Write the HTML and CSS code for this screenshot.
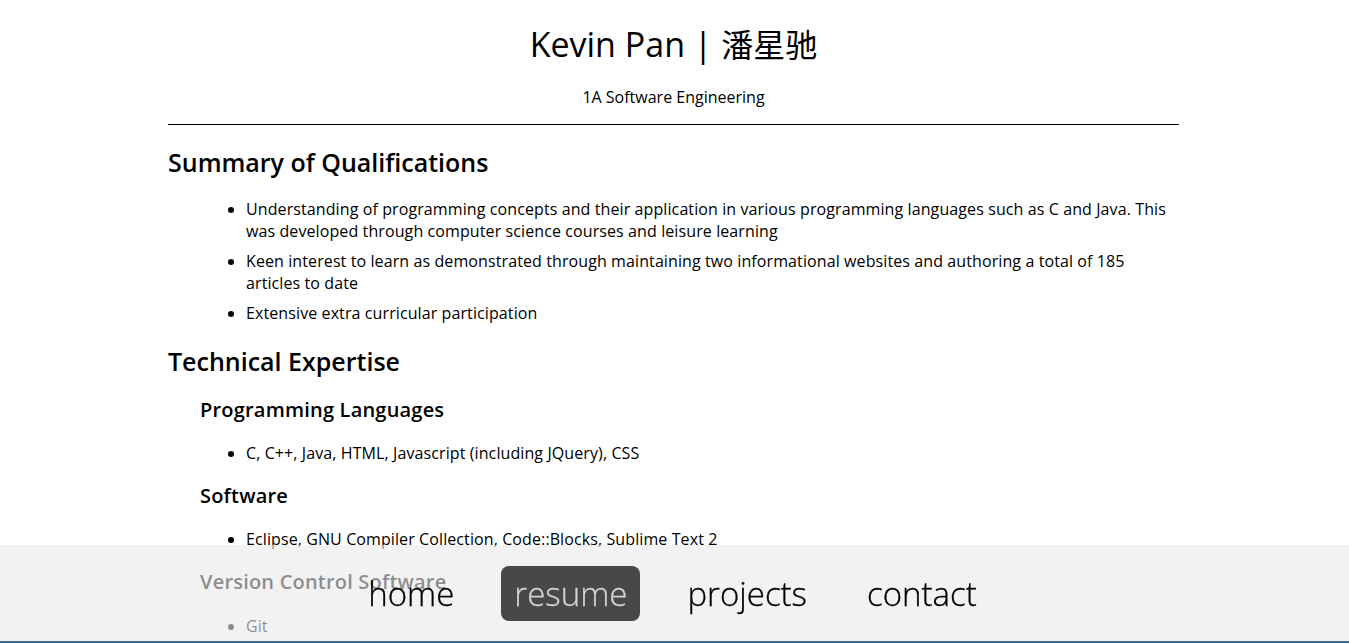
FILE: index.html
```html
<!DOCTYPE html>
<html lang="en">
<head>
<meta charset="utf-8">
<title>Kevin Pan | 潘星驰 - Resume</title>
<link rel="stylesheet" href="styles.css">
</head>
<body>
<div class="page">
  <header class="masthead">
    <h1 class="name">Kevin Pan | <span class="cjk">潘星驰</span></h1>
    <p class="tagline">1A Software Engineering</p>
  </header>
  <hr class="rule">
  <h2 class="section-title">Summary of Qualifications</h2>
  <ul class="list">
    <li>Understanding of programming concepts and their application in various programming languages such as C and Java. This was developed through computer science courses and leisure learning</li>
    <li>Keen interest to learn as demonstrated through maintaining two informational websites and authoring a total of 185 articles to date</li>
    <li>Extensive extra curricular participation</li>
  </ul>
  <h2 class="section-title">Technical Expertise</h2>
  <h3 class="sub-title">Programming Languages</h3>
  <ul class="list">
    <li>C, C++, Java, HTML, Javascript (including JQuery), CSS</li>
  </ul>
  <h3 class="sub-title">Software</h3>
  <ul class="list">
    <li>Eclipse, GNU Compiler Collection, Code::Blocks, Sublime Text 2</li>
  </ul>
  <h3 class="sub-title">Version Control Software</h3>
  <ul class="list list-git">
    <li>Git</li>
  </ul>
  <h2 class="section-title">Extracurricular Activities</h2>
</div>
<nav class="nav">
  <a class="nav-link" href="#">home</a>
  <a class="nav-link active" href="#">resume</a>
  <a class="nav-link" href="#">projects</a>
  <a class="nav-link" href="#">contact</a>
</nav>
<div class="taskbar"></div>
</body>
</html>
```
FILE: styles.css
```css
html, body {
  margin: 0;
  padding: 0;
  overflow: hidden;
  background: #fff;
}
body {
  font-family: "Open Sans", "Noto Sans CJK SC", sans-serif;
  font-size: 16px;
  color: #000;
}
.page {
  width: 1011px;
  margin: 0 auto;
  padding-right: 2px;
}
.masthead {
  text-align: center;
}
.name {
  font-size: 34px;
  font-weight: 400;
  line-height: 40px;
  margin: 23px 0 0;
}
.cjk {
  font-family: "Noto Sans CJK SC", sans-serif;
  font-size: 32px;
}
.tagline {
  margin: 22px 0 0;
  line-height: 22px;
}
.rule {
  border: 0;
  border-top: 1px solid #000;
  margin: 16px 0 0;
  height: 0;
}
.section-title {
  font-size: 25px;
  font-weight: 600;
  line-height: 32px;
  margin: 21px 0 19px;
}
.sub-title {
  font-size: 20px;
  font-weight: 600;
  line-height: 28px;
  letter-spacing: 0.2px;
  margin: 18px 0 18px 32px;
}
.list {
  margin: 18px 0;
  padding-left: 78px;
  line-height: 22px;
  letter-spacing: 0.1px;
}
.section-title + .list {
  margin-top: 20px;
}
.list-git {
  margin-top: 19px;
}
.list li {
  margin-bottom: 8px;
}
.list li:last-child {
  margin-bottom: 0;
}
.nav {
  position: fixed;
  left: 0;
  right: 0;
  bottom: 2px;
  height: 96px;
  padding-right: 4px;
  background: rgba(234, 234, 234, 0.6);
  display: flex;
  justify-content: center;
  align-items: center;
}
.nav-link {
  font-size: 33px;
  font-weight: 300;
  line-height: 55px;
  padding: 0 13px;
  margin: 0 17px;
  border-radius: 8px;
  color: #000;
  text-decoration: none;
  -webkit-text-stroke: 0.3px #000;
}
.nav-link.active {
  background: #484848;
  color: #d2d2d2;
  -webkit-text-stroke: 0.3px #d2d2d2;
}
.taskbar {
  position: fixed;
  left: 0;
  right: 0;
  bottom: 0;
  height: 2px;
  background: #3d6b94;
}
```
